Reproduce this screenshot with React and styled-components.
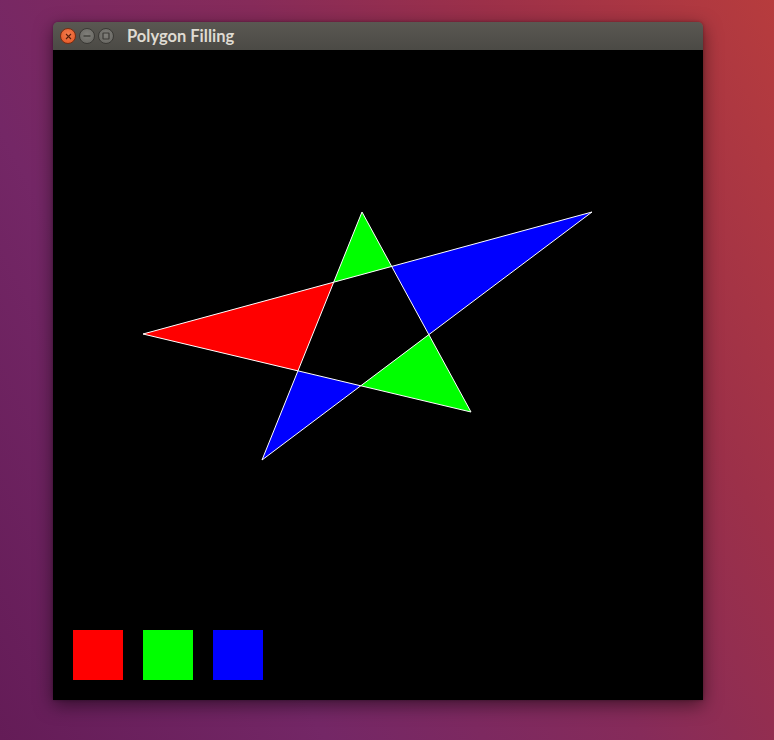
import React from "react";
import styled, { createGlobalStyle } from "styled-components";

const GlobalStyle = createGlobalStyle`
  html, body {
    margin: 0;
    padding: 0;
    height: 100%;
    overflow: hidden;
  }
  #root {
    height: 100%;
  }
`;

// outer points of the star, canvas coordinates
const TOP = [309, 162];
const RIGHT = [539, 162];
const LEFT = [90, 284];
const BOTTOM_RIGHT = [418, 362];
const BOTTOM_LEFT = [209, 410];

// inner pentagon where the edges cross
const A = [280.7, 232.2];
const B = [338.7, 216.4];
const C = [375.8, 284.6];
const D = [307.8, 335.8];
const E = [244.9, 320.9];

const tips = [
  { points: [TOP, A, B], fill: "#00ff00" },
  { points: [RIGHT, B, C], fill: "#0000ff" },
  { points: [BOTTOM_RIGHT, C, D], fill: "#00ff00" },
  { points: [BOTTOM_LEFT, D, E], fill: "#0000ff" },
  { points: [LEFT, E, A], fill: "#ff0000" }
];

const swatches = ["#ff0000", "#00ff00", "#0000ff"];

const toPoints = pts => pts.map(p => p.join(",")).join(" ");

class App extends React.Component {
  render() {
    return (
      <Desktop>
        <GlobalStyle />
        <Window>
          <TitleBar>
            <Controls>
              <WindowButton variant="close">
                <svg width="7" height="7" viewBox="0 0 7 7">
                  <path d="M1 1L6 6M6 1L1 6" stroke="#5a1f0b" strokeWidth="1.1" />
                </svg>
              </WindowButton>
              <WindowButton>
                <svg width="8" height="8" viewBox="0 0 8 8">
                  <path d="M0.5 4H7.5" stroke="#3c3b37" strokeWidth="1.3" />
                </svg>
              </WindowButton>
              <WindowButton>
                <svg width="8" height="8" viewBox="0 0 8 8">
                  <rect x="1" y="1" width="6" height="6" rx="0.5" fill="none" stroke="#3c3b37" strokeWidth="1.2" />
                </svg>
              </WindowButton>
            </Controls>
            <Title>Polygon Filling</Title>
          </TitleBar>
          <Canvas>
            <Star width="650" height="650" viewBox="0 0 650 650">
              {tips.map((tip, i) => (
                <polygon key={i} points={toPoints(tip.points)} fill={tip.fill} />
              ))}
              <path
                d={`M${TOP} L${BOTTOM_RIGHT} L${LEFT} L${RIGHT} L${BOTTOM_LEFT} Z`}
                fill="none"
                stroke="#ffffff"
                strokeWidth="1"
              />
            </Star>
            <Swatches>
              {swatches.map(color => (
                <Swatch key={color} color={color} />
              ))}
            </Swatches>
          </Canvas>
        </Window>
      </Desktop>
    );
  }
}

export default App;

const Desktop = styled.div`
  width: 100%;
  height: 100%;
  box-sizing: border-box;
  padding: 22px 0 0 53px;
  background: linear-gradient(
    62deg,
    #641c57 0%,
    #742766 28%,
    #862b5a 55%,
    #9c3049 75%,
    #b73c3d 100%
  );
`;

const Window = styled.div`
  width: 650px;
  display: flex;
  flex-direction: column;
  border-radius: 5px 5px 0 0;
  box-shadow: 0 5px 18px rgba(0, 0, 0, 0.5), 0 0 3px rgba(0, 0, 0, 0.3);
`;

const TitleBar = styled.div`
  height: 28px;
  display: flex;
  align-items: center;
  padding-left: 7px;
  border-radius: 5px 5px 0 0;
  background: linear-gradient(#5a5852, #4b4a45);
`;

const Controls = styled.div`
  display: flex;
  gap: 3px;
  margin-right: 13px;
`;

const WindowButton = styled.div`
  width: 16px;
  height: 16px;
  box-sizing: border-box;
  border-radius: 50%;
  display: flex;
  align-items: center;
  justify-content: center;
  border: 1px solid ${p => (p.variant === "close" ? "#7a2d12" : "#3a3935")};
  background: ${p =>
    p.variant === "close"
      ? "radial-gradient(circle at 50% 40%, #f47e50, #e2521f)"
      : "radial-gradient(circle at 50% 40%, #807f7a, #64635e)"};
`;

const Title = styled.span`
  font-family: Lato, "Liberation Sans", sans-serif;
  font-weight: bold;
  font-size: 16.5px;
  color: #dfdbd2;
`;

const Canvas = styled.div`
  position: relative;
  height: 650px;
  box-sizing: border-box;
  background: #000000;
  display: flex;
  flex-direction: column;
  justify-content: flex-end;
  padding: 0 0 20px 20px;
`;

const Star = styled.svg`
  position: absolute;
  left: 0;
  top: 0;
`;

const Swatches = styled.div`
  display: flex;
  gap: 20px;
`;

const Swatch = styled.div`
  width: 50px;
  height: 50px;
  background: ${p => p.color};
`;
